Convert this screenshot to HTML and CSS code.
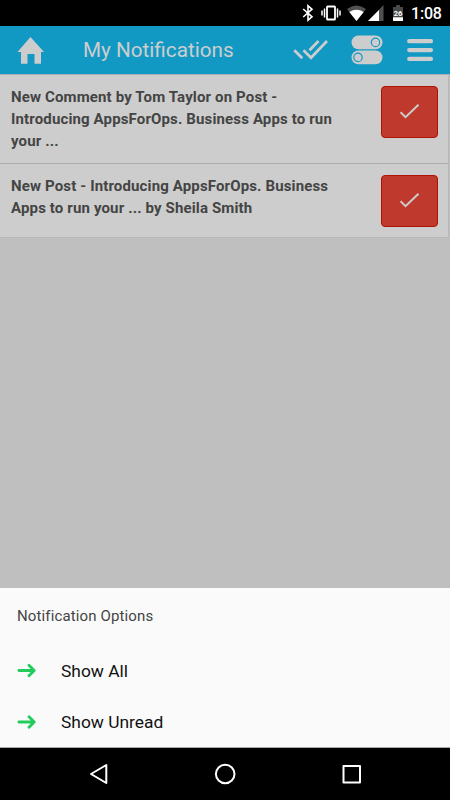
FILE: index.html
```html
<!DOCTYPE html>
<html lang="en">
<head>
<meta charset="utf-8">
<title>My Notifications</title>
<link rel="stylesheet" href="styles.css">
</head>
<body>
<div class="status">
  <svg class="bt" width="12" height="18" viewBox="0 0 12 18"><path d="M1.2 5 L10 12.8 L6 16.2 V1.8 L10 5.2 L1.2 13" fill="none" stroke="#fff" stroke-width="1.6"/></svg>
  <svg class="vib" width="20" height="18" viewBox="0 0 20 18"><g fill="none" stroke="#fff"><rect x="6" y="2.5" width="8" height="13" rx=".6" stroke-width="1.8"/><path d="M3.5 4.5v9M16.5 4.5v9M1 6.5v5M19 6.5v5" stroke-width="1.5"/></g></svg>
  <svg class="wifi" width="20" height="18" viewBox="0 0 20 18"><path d="M9.500 17 0 5Q9.500-2 19 5z" fill="#505050"/><path d="M9.500 17 2.300 8Q9.500 3.500 16.700 8z" fill="#fff"/></svg>
  <svg class="signal" width="16" height="18" viewBox="0 0 16 18"><path d="M0 17 15.500 1v16z" fill="#505050"/><path d="M0 17 11 6v11z" fill="#fff"/></svg>
  <svg class="battery" width="10" height="18" viewBox="0 0 10 18"><path d="M0 3h3V1h4v2h3v14H0z" fill="#484848"/><path d="M0 13.300h10V17H0z" fill="#fff"/><text x="5" y="11.800" class="pct">26</text></svg>
  <span class="time">1:08</span>
</div>
<header class="bar">
  <svg class="home" width="27" height="28" viewBox="0 0 27 28"><path d="M13.500 1 27 16h-3v11.800h-6.500V18h-7v9.800H4V16H.5z" fill="#cdcdcd"/></svg>
  <h1 class="title">My Notifications</h1>
  <svg class="dbl" width="36" height="22" viewBox="0 0 36 22"><path d="M1.300 11.200 9.300 19.200M10.500 11.200l7.500 7.600L34 2M16.500 11.200 25.500 2" fill="none" stroke="#cdcdcd" stroke-width="2.700"/></svg>
  <svg class="toggles" width="32" height="30" viewBox="0 0 32 30"><rect x=".5" y=".5" width="31" height="13.800" rx="6.900" fill="#cdcdcd"/><rect x=".5" y="15.500" width="31" height="13.800" rx="6.900" fill="#cdcdcd"/><g fill="none" stroke="#1199c4" stroke-width="1.200"><circle cx="24.500" cy="7.400" r="4.200"/><circle cx="7" cy="22.400" r="4.200"/></g></svg>
  <svg class="menu" width="27" height="24" viewBox="0 0 27 24"><path d="M2.200 3.200h21.800M2.200 12.100h21.800M2.200 20.900h21.800" stroke="#cdcdcd" stroke-width="4.200" stroke-linecap="round"/></svg>
</header>
<main class="page">
  <ul class="list">
    <li class="item"><p class="text">New Comment by Tom Taylor on Post - Introducing AppsForOps. Business Apps to run your ...</p><button class="mark" aria-label="Mark read"><svg width="20" height="16" viewBox="0 0 20 16"><path d="m.5 9.200 5 5L18.500 1.800" fill="none" stroke="#cdcdcd" stroke-width="2"/></svg></button></li>
    <li class="item"><p class="text">New Post - Introducing AppsForOps. Business Apps to run your ... by Sheila Smith</p><button class="mark" aria-label="Mark read"><svg width="20" height="16" viewBox="0 0 20 16"><path d="m.5 9.200 5 5L18.500 1.800" fill="none" stroke="#cdcdcd" stroke-width="2"/></svg></button></li>
  </ul>
</main>
<section class="sheet">
  <h2 class="sheet-title">Notification Options</h2>
  <div class="option"><svg class="arrow" width="19" height="16" viewBox="0 0 19 16"><path d="M1.900 7.500H16M12 2.200 17.200 7.500 12 12.800"/></svg><span>Show All</span></div>
  <div class="option"><svg class="arrow" width="19" height="16" viewBox="0 0 19 16"><path d="M1.900 8H16M12 2.700 17.200 8 12 13.300"/></svg><span>Show Unread</span></div>
</section>
<nav class="nav">
  <svg width="22" height="22" viewBox="0 0 22 22"><path d="M3 11 18.300 2v18z"/></svg>
  <svg width="22" height="22" viewBox="0 0 22 22"><circle cx="11.200" cy="11" r="9.300"/></svg>
  <svg width="22" height="22" viewBox="0 0 22 22"><rect x="3.500" y="3" width="16.500" height="16.500"/></svg>
</nav>
</body>
</html>
```
FILE: styles.css
```css
* { box-sizing: border-box; }
body {
  margin: 0;
  height: 800px;
  display: flex;
  flex-direction: column;
  overflow: hidden;
  background: #000;
  font-family: Roboto, "Liberation Sans", sans-serif;
}
svg { display: block; flex: none; }
.status {
  height: 26px;
  flex: none;
  display: flex;
  align-items: center;
  padding-left: 302px;
  color: #fff;
}
.vib { margin-left: 7px; }
.wifi { margin-left: 6px; }
.signal { margin-left: 1px; }
.battery { margin-left: 9px; }
.pct { font-size: 7.5px; font-weight: 700; fill: #fff; text-anchor: middle; }
.time { margin-left: 8px; font-size: 16px; font-weight: 500; line-height: 28px; padding-top: 1px; letter-spacing: -0.2px; }
.bar {
  height: 49px;
  flex: none;
  display: flex;
  align-items: center;
  padding-left: 17px;
  background: #1199c4;
  border-bottom: 1px solid #a9b0b5;
}
.title {
  width: 210px;
  margin: 0 0 0 39px;
  font-size: 20.7px;
  font-weight: 400;
  line-height: 46px;
  color: #cdcdcd;
  white-space: nowrap;
}
.toggles { margin-left: 22px; }
.menu { margin-left: 24px; }
.page { flex: 1; background: #bfbfbf; }
.list {
  margin: 0 1px 0 0;
  padding: 0;
  list-style: none;
  background: #cdcdcd;
  border-right: 1px solid #b8b8b8;
}
.item {
  display: flex;
  justify-content: space-between;
  align-items: flex-start;
  padding: 11px 10px 0 11px;
  height: 89px;
  border-bottom: 1px solid #adadad;
}
.item + .item { height: 74px; border-color: #b8b8b8; }
.text {
  width: 335px;
  margin: 0;
  font-size: 15px;
  font-weight: 700;
  line-height: 22px;
  letter-spacing: 0.14px;
  color: #444;
}
.mark {
  width: 57px;
  height: 52px;
  padding: 0 0 2px;
  display: flex;
  align-items: center;
  justify-content: center;
  background: #c0392d;
  border: 1px solid #b21205;
  border-radius: 4px;
}
.sheet {
  height: 160px;
  flex: none;
  background: #fafafa;
  border-bottom: 1px solid #aaa;
}
.sheet-title {
  margin: 0;
  padding-left: 17px;
  height: 57px;
  font-size: 15px;
  font-weight: 400;
  line-height: 56px;
  letter-spacing: 0.13px;
  color: #444;
}
.option {
  height: 51px;
  display: flex;
  align-items: center;
  gap: 25px;
  padding-left: 17px;
  font-size: 17.4px;
  color: #111;
}
.arrow {
  fill: none;
  stroke: #22cc5c;
  stroke-width: 2.8;
  stroke-linecap: round;
  stroke-linejoin: round;
}
.nav {
  height: 52px;
  flex: none;
  display: flex;
  justify-content: space-between;
  align-items: center;
  padding: 0 88px;
}
.nav svg { fill: none; stroke: #fff; stroke-width: 2; stroke-linejoin: round; }
```
